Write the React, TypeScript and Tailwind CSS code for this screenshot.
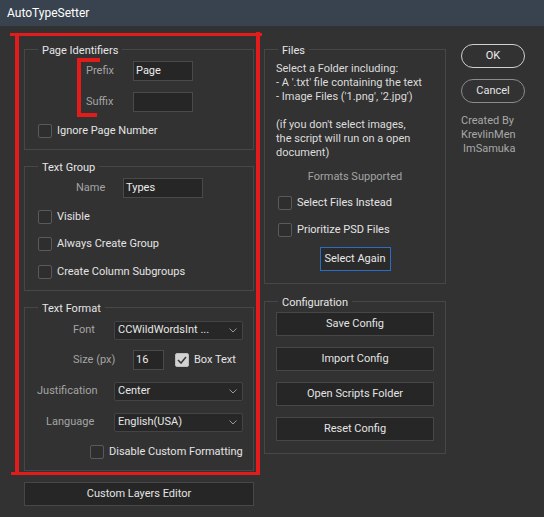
import React from 'react'

// small building blocks for the ScriptUI-like dialog
function Check({ checked = false }: { checked?: boolean }) {
  if (checked) {
    return (
      <span className="flex h-[14px] w-[14px] shrink-0 items-center justify-center rounded-[2px] border border-[#bcbcbc] bg-[#d2d2d2]">
        <svg width="10" height="8" viewBox="0 0 10 8">
          <polyline points="1,4 4,7 9,1" fill="none" stroke="#3a3a3a" strokeWidth="1.6" />
        </svg>
      </span>
    )
  }
  return <span className="block h-[14px] w-[14px] shrink-0 rounded-[2px] border border-[#5a5a5a] bg-[#2e2e2e]" />
}

function CheckRow({ label, checked, className }: { label: string; checked?: boolean; className?: string }) {
  return (
    <div className={`flex h-[14px] items-center gap-[5px] ${className ?? ''}`}>
      <Check checked={checked} />
      <span className="leading-[14px] text-[#e4e4e4]">{label}</span>
    </div>
  )
}

function Field({ value, w }: { value?: string; w: string }) {
  return (
    <div className={`flex h-[20px] items-center border border-[#4a4a4a] bg-[#262626] pl-[2px] text-[#ececec] ${w}`}>
      {value}
    </div>
  )
}

function Select({ value }: { value: string }) {
  return (
    <div className="flex h-[19px] w-[129px] items-center justify-between rounded-[2px] border border-[#444] bg-[#272727] pl-[3px] pr-[5px] text-[#e6e6e6]">
      <span>{value}</span>
      <svg width="8" height="5" viewBox="0 0 8 5">
        <polyline points="0.5,0.5 4,4 7.5,0.5" fill="none" stroke="#9a9a9a" strokeWidth="1" />
      </svg>
    </div>
  )
}

function Btn({ label, className }: { label: string; className?: string }) {
  return (
    <div className={`flex h-[24px] items-center justify-center border border-[#474747] bg-[#262626] text-[#e4e4e4] ${className ?? ''}`}>
      {label}
    </div>
  )
}

// legend text sits a little below the group's top border, as in ScriptUI
function Legend({ children }: { children: React.ReactNode }) {
  return <legend className="ml-[13px] px-[4px] pt-[4px] leading-[14px] text-[#e6e6e6]">{children}</legend>
}

export default function App() {
  return (
    <div className="relative h-[517px] w-[544px] overflow-hidden bg-[#323232] font-['Roboto','Liberation_Sans',sans-serif] text-[11px]">
      {/* Title bar */}
      <div className="flex h-[26px] items-center bg-[#38434f] pl-[7px] text-[12px] text-white">AutoTypeSetter</div>

      <div className="flex pl-[24px] pt-[14px]">
        {/* Left column */}
        <div className="flex w-[230px] flex-col">
          <fieldset className="h-[110px] border border-[#474747]">
            <Legend>Page Identifiers</Legend>
            <div className="mt-[3px] flex h-[20px] items-center">
              <span className="w-[108px] pl-[61px] text-[#a4a4a4]">Prefix</span>
              <Field value="Page" w="w-[60px]" />
            </div>
            <div className="mt-[11px] flex h-[20px] items-center">
              <span className="w-[108px] pl-[61px] text-[#a4a4a4]">Suffix</span>
              <Field w="w-[60px]" />
            </div>
            <CheckRow label="Ignore Page Number" className="ml-[13px] mt-[12px]" />
          </fieldset>

          <fieldset className="mt-[7px] h-[134px] border border-[#474747]">
            <Legend>Text Group</Legend>
            <div className="mt-[3px] flex h-[20px] items-center">
              <span className="w-[98px] pl-[51px] text-[#a4a4a4]">Name</span>
              <Field value="Types" w="w-[80px]" />
            </div>
            <CheckRow label="Visible" className="ml-[13px] mt-[12px]" />
            <CheckRow label="Always Create Group" className="ml-[13px] mt-[13px]" />
            <CheckRow label="Create Column Subgroups" className="ml-[13px] mt-[14px]" />
          </fieldset>

          <fieldset className="mt-[7px] h-[173px] border border-[#474747]">
            <Legend>Text Format</Legend>
            <div className="mt-[5px] flex items-center">
              <span className="w-[89px] pl-[48px] text-[#a4a4a4]">Font</span>
              <Select value="CCWildWordsInt ..." />
            </div>
            <div className="mt-[10px] flex items-center">
              <span className="w-[108px] pl-[48px] text-[#a4a4a4]">Size (px)</span>
              <Field value="16" w="w-[31px]" />
              <CheckRow label="Box Text" checked className="ml-[11px]" />
            </div>
            <div className="mt-[12px] flex items-center">
              <span className="w-[89px] pl-[12px] text-[#a4a4a4]">Justification</span>
              <Select value="Center" />
            </div>
            <div className="mt-[12px] flex items-center">
              <span className="w-[89px] pl-[21px] text-[#a4a4a4]">Language</span>
              <Select value="English(USA)" />
            </div>
            <CheckRow label="Disable Custom Formatting" className="ml-[65px] mt-[13px]" />
          </fieldset>

          <Btn label="Custom Layers Editor" className="mt-[11px] w-[230px]" />
        </div>

        {/* Middle column */}
        <div className="ml-[10px] flex w-[182px] flex-col">
          <fieldset className="h-[244px] border border-[#474747]">
            <Legend>Files</Legend>
            <div className="mt-[4px] pl-[11px] leading-[14px] text-[#dcdcdc]">
              <div>Select a Folder including:</div>
              <div>- A '.txt' file containing the text</div>
              <div>- Image Files ('1.png', '2.jpg')</div>
              <div className="h-[14px]" />
              <div>(if you don't select images,</div>
              <div>the script will run on a open</div>
              <div>document)</div>
            </div>
            <div className="mt-[10px] text-center leading-[14px] text-[#a4a4a4]">Formats Supported</div>
            <CheckRow label="Select Files Instead" className="ml-[13px] mt-[12px]" />
            <CheckRow label="Prioritize PSD Files" className="ml-[13px] mt-[13px]" />
            <div className="mt-[10px] flex justify-center">
              <div className="flex h-[24px] w-[71px] items-center justify-center border border-[#2a6dc4] bg-[#2a2a2a] text-[#e8e8e8]">
                Select Again
              </div>
            </div>
          </fieldset>

          <fieldset className="mt-[8px] h-[162px] border border-[#474747]">
            <Legend>Configuration</Legend>
            <div className="ml-[11px] mt-[2px] flex w-[158px] flex-col gap-[11px]">
              <Btn label="Save Config" />
              <Btn label="Import Config" />
              <Btn label="Open Scripts Folder" />
              <Btn label="Reset Config" />
            </div>
          </fieldset>
        </div>

        {/* Right column */}
        <div className="ml-[15px] flex w-[64px] flex-col pt-[4px]">
          <div className="flex h-[24px] items-center justify-center rounded-full border border-[#d0d0d0] text-[#eeeeee]">OK</div>
          <div className="mt-[11px] flex h-[24px] items-center justify-center rounded-full border border-[#8c8c8c] text-[#e4e4e4]">
            Cancel
          </div>
          <div className="mt-[11px] leading-[14px] text-[#a8a8a8]">
            <div>Created By</div>
            <div>KrevlinMen</div>
            <div className="pl-[2px]">ImSamuka</div>
          </div>
        </div>
      </div>

      {/* red annotation marks drawn over the dialog */}
      <div className="absolute left-[10px] top-[33px] h-[3px] w-[252px] bg-[#e41b1b]" />
      <div className="absolute left-[15px] top-[33px] h-[442px] w-[4px] bg-[#e41b1b]" />
      <div className="absolute left-[256px] top-[32px] h-[443px] w-[4px] bg-[#e41b1b]" />
      <div className="absolute left-[11px] top-[472px] h-[3px] w-[249px] bg-[#e41b1b]" />
      <div className="absolute left-[77px] top-[58px] h-[59px] w-[4px] bg-[#e41b1b]" />
      <div className="absolute left-[77px] top-[58px] h-[4px] w-[23px] bg-[#e41b1b]" />
      <div className="absolute left-[77px] top-[113px] h-[4px] w-[20px] bg-[#e41b1b]" />
    </div>
  )
}
